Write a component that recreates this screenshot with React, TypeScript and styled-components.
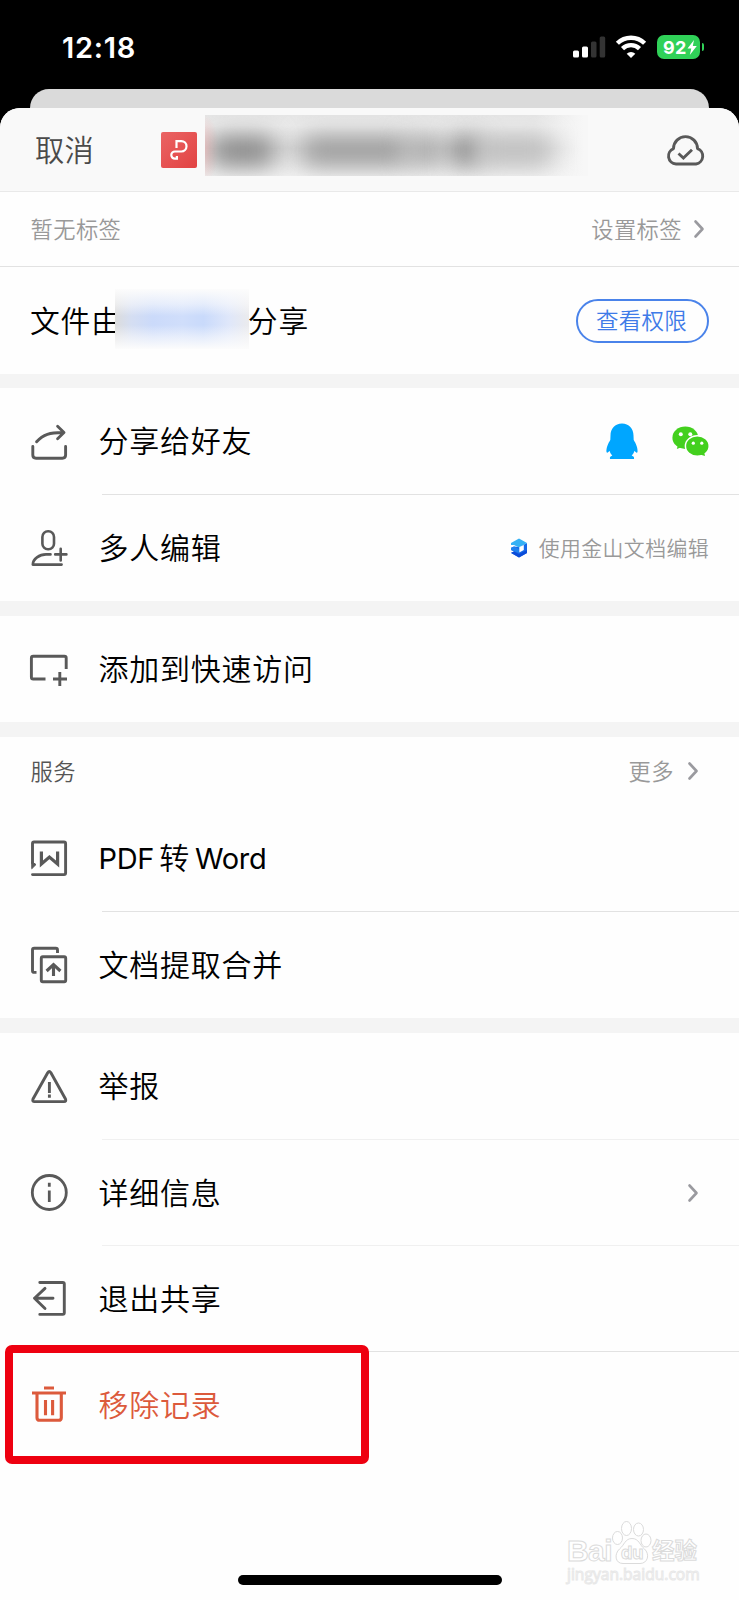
import React from 'react';
import styled, { createGlobalStyle } from 'styled-components';

const GlobalStyle = createGlobalStyle`
  * { box-sizing: border-box; }
  body {
    margin: 0;
    background: #000;
    font-family: 'Inter', 'Noto Sans CJK SC', sans-serif;
    font-weight: 350;
    -webkit-font-smoothing: antialiased;
  }
`;

const Screen = styled.div`
  position: relative;
  width: 739px;
  height: 1600px;
  display: flex;
  flex-direction: column;
  background: #000;
  overflow: hidden;
`;

const StatusBar = styled.div`
  height: 89px;
  padding: 5px 35px 0 62px;
  display: flex;
  align-items: center;
  justify-content: space-between;
  color: #fff;
`;

const Time = styled.span`
  font-size: 29px;
  font-weight: 600;
  letter-spacing: 0.7px;
`;

const StatusIcons = styled.div`
  display: flex;
  align-items: center;
`;

const Signal = styled.svg`
  width: 33px;
  height: 24px;
  margin-right: 9px;
`;

const Wifi = styled.svg`
  width: 32px;
  height: 24px;
  margin-right: 10px;
`;

const Battery = styled.div`
  display: flex;
  align-items: center;
  gap: 2px;
`;

const BatteryBody = styled.div`
  width: 43px;
  height: 24px;
  padding-left: 6px;
  border-radius: 7px;
  background: #30d158;
  display: flex;
  align-items: center;
  font-size: 18px;
  font-weight: 700;
  letter-spacing: 0.3px;
`;

const BatteryNub = styled.div`
  width: 2px;
  height: 8px;
  border-radius: 0 2px 2px 0;
  background: #30d158;
`;

const BackCard = styled.div`
  height: 19px;
  margin: 0 30px;
  border-radius: 19px 19px 0 0;
  background: #dadada;
`;

const Sheet = styled.main`
  flex: 1;
  border-radius: 20px 20px 0 0;
  overflow: hidden;
  background: #fefefe;
`;

const Header = styled.header`
  height: 84px;
  padding: 0 33px 0 35px;
  background: #f9f9f9;
  border-bottom: 1px solid #e9e9e9;
  display: flex;
  align-items: center;
`;

const Cancel = styled.span`
  width: 126px;
  margin-top: -3px;
  font-size: 29.3px;
  letter-spacing: 0.2px;
  color: #4a4a4a;
`;

const FileBadge = styled.svg`
  width: 36px;
  height: 36px;
  margin-right: 8px;
`;

const HiddenTitle = styled.div`
  width: 383px;
  height: 61px;
  margin: -9px auto 0 0;
  overflow: hidden;
  background:
    radial-gradient(ellipse 14px 34px at 0 55%, rgba(250, 195, 195, 0.8), transparent),
    linear-gradient(90deg, transparent 86%, #f7f7f7 99%),
    linear-gradient(180deg, #e6e6e6 0, #ececec 18%, #dadada 55%, #f2f2f2);
`;

const SmudgeLine = styled.div`
  display: flex;
`;

const Smudge = styled.span<{ $w: number; $gap: number; $tone: string }>`
  width: ${(p) => p.$w}px;
  height: 28px;
  margin: 22px 0 0 ${(p) => p.$gap}px;
  background: ${(p) => p.$tone};
  filter: blur(12px);
`;

const TagRow = styled.div`
  height: 75px;
  padding: 0 34px 0 30.5px;
  border-bottom: 1px solid #e2e2e2;
  display: flex;
  align-items: center;
  justify-content: space-between;
`;

const Muted = styled.span<{ $size?: number; $dark?: boolean }>`
  margin-top: -2px;
  font-size: ${(p) => p.$size ?? 22.3}px;
  letter-spacing: 0.4px;
  color: ${(p) => (p.$dark ? '#555' : '#999')};
`;

const Trailing = styled.div<{ $gap: number; $inset?: number }>`
  margin-left: auto;
  margin-right: ${(p) => p.$inset ?? 0}px;
  display: flex;
  align-items: center;
  gap: ${(p) => p.$gap}px;
`;

const OwnerRow = styled.div`
  height: 107px;
  padding: 0 30px;
  display: flex;
  align-items: center;
  color: #000;
`;

const OwnerText = styled.span`
  margin-top: -3px;
  font-size: 29.8px;
  letter-spacing: 0.8px;
`;

const HiddenName = styled.div`
  width: 134px;
  height: 60px;
  margin: -3px -1px 0 -7px;
  position: relative;
  overflow: hidden;
  background:
    linear-gradient(180deg, rgba(252, 252, 252, 1) 0, rgba(252, 252, 252, 0.55) 25%, rgba(252, 252, 252, 0) 45%, rgba(252, 252, 252, 0) 60%, rgba(252, 252, 252, 0.55) 80%, rgba(252, 252, 252, 1) 100%),
    linear-gradient(90deg, #dcdcdc 0, #d5def2 12%, #cbdafa 28%, #d0defb 50%, #c9dafb 66%, #dfe7fa 85%, #ebebed 100%);
`;

const PillButton = styled.button`
  width: 133px;
  height: 44px;
  margin-left: auto;
  padding: 0 2px 3px 0;
  border: 2px solid #4a83ea;
  border-radius: 22px;
  background: transparent;
  font: inherit;
  font-size: 22.5px;
  letter-spacing: 0.3px;
  color: #3f7be8;
`;

const Section = styled.section`
  border-top: 15px solid #f4f4f4;

  &:first-of-type {
    border-top-width: 14px;
  }
`;

const Row = styled.div<{ $danger?: boolean }>`
  height: 106px;
  padding: 0 30px 0 29px;
  display: flex;
  align-items: center;
  color: ${(p) => (p.$danger ? '#dc5a3c' : '#000')};
`;

const Divider = styled.hr<{ $faint?: boolean; $tight?: boolean }>`
  height: 1px;
  margin: ${(p) => (p.$tight ? '-1px' : '0')} 0 0 102px;
  border: 0;
  background: ${(p) => (p.$faint ? '#f0f0f0' : '#e2e2e2')};
`;

const Label = styled.span`
  margin: -4px 0 0 29.5px;
  font-size: 30px;
  letter-spacing: 0.75px;
`;

const Latin = styled.span`
  font-weight: 400;
  font-size: 29px;
  letter-spacing: -0.3px;
`;

const Joint = styled.span`
  margin: 0 5px;
`;

const RowIcon = styled.svg<{ $danger?: boolean }>`
  width: 40px;
  height: 40px;
  flex: none;
  fill: none;
  stroke: ${(p) => (p.$danger ? '#dc5a3c' : '#595959')};
  stroke-width: 2.9;
  stroke-linecap: round;
  stroke-linejoin: round;
`;

const ServiceHead = styled.div`
  height: 68px;
  padding: 0 30.5px;
  display: flex;
  align-items: center;
`;

const ChevronIcon = styled.svg`
  width: 12px;
  height: 20px;
  flex: none;
  fill: none;
  stroke: #9a9a9f;
  stroke-width: 2.6;
  stroke-linecap: round;
  stroke-linejoin: round;
`;

const AppLogo = styled.svg<{ $w: number; $h: number }>`
  width: ${(p) => p.$w}px;
  height: ${(p) => p.$h}px;
`;

const Highlight = styled.div`
  position: absolute;
  left: 5px;
  top: 1345px;
  width: 364px;
  height: 119px;
  border: 8px solid #ee0010;
  border-radius: 7px;
`;

const HomeIndicator = styled.div`
  position: absolute;
  left: 238px;
  bottom: 15px;
  width: 264px;
  height: 10px;
  border-radius: 5px;
  background: #000;
`;

const Watermark = styled.div`
  position: absolute;
  left: 567px;
  top: 1519px;
  width: 140px;
  color: #fff;
  -webkit-text-stroke: 1px #dbdbdb;
`;

const WatermarkTop = styled.div`
  display: flex;
  align-items: flex-end;
  height: 45px;
  font-weight: 700;
  line-height: 26px;
`;

const WatermarkBai = styled.span`
  width: 45px;
  font-family: 'Liberation Sans', sans-serif;
  font-size: 30px;
  letter-spacing: -0.6px;
`;

const Paw = styled.svg`
  width: 40px;
  height: 44px;
`;

const WatermarkCn = styled.span`
  font-size: 22.5px;
`;

const WatermarkUrl = styled.div`
  margin-top: 3px;
  font-family: 'Open Sans', sans-serif;
  font-size: 15.6px;
  line-height: 15px;
  font-weight: 400;
  white-space: nowrap;
  -webkit-text-stroke: 1px #e8e8e8;
`;

const Chevron = () => (
  <ChevronIcon viewBox="0 0 12 20">
    <path d="M2.5 2.5 L9.5 10 L2.5 17.5" />
  </ChevronIcon>
);

const glyphs = {
  share: (
    <>
      <path d="M3.8 25.5V34q0 3.2 3.2 3.2H33.4q3.2 0 3.2-3.2V25.5" />
      <path d="M7.6 20.8C14 13.5 21 11.3 34.5 11.5M28.6 5.3L35 11.5L28.6 17.7" />
    </>
  ),
  invite: (
    <g strokeWidth="2.6">
      <rect x="13.4" y="3.3" width="11.6" height="18" rx="5.6" />
      <path d="M21.5 26.4H17C10.5 26.4 3.8 31 3.8 36.6H32.6" />
      <path d="M26.2 26.4H37.4M31.7 20.8V32.4" />
    </g>
  ),
  quick: (
    <>
      <path d="M16.5 30H4.2q-1.8 0-1.8-1.8V9q0-1.8 1.8-1.8H35.4q1.8 0 1.8 1.8V20" strokeLinecap="butt" />
      <path d="M24 30H38M30.8 23V37" strokeLinecap="butt" />
    </>
  ),
  word: (
    <>
      <path d="M3.5 25V5.5q0-1.5 1.5-1.5H35q1.6 0 1.6 1.5V35q0 1.6-1.6 1.6H3.5" />
      <path d="M3 24L7 26.5L3 30.5Z" fill="#595959" strokeWidth="1" />
      <path d="M12.4 13.5V26L20.4 19L28.6 26V13.5" strokeWidth="3.2" strokeLinecap="butt" strokeLinejoin="miter" />
    </>
  ),
  merge: (
    <>
      <path d="M7.5 27.4H5.2q-1.7 0-1.7-1.7V5q0-1.7 1.7-1.7H26.8q1.7 0 1.7 1.7V8" strokeLinecap="butt" />
      <rect x="12.3" y="11.7" width="24.4" height="25" rx="1.5" />
      <path d="M24.5 31V20M17.6 26L24.5 19.6L31.4 26" strokeWidth="3.1" strokeLinecap="butt" strokeLinejoin="miter" />
    </>
  ),
  warn: (
    <g strokeWidth="2.9">
      <path d="M18.7 6.7Q20.3 4.2 21.9 6.7L36.5 33Q37.5 35.6 35 35.6H5.6Q3 35.6 4 33Z" />
      <path d="M20.4 16V27M20.4 28.5V31.7" strokeLinecap="butt" />
    </g>
  ),
  info: (
    <g strokeWidth="2.8">
      <circle cx="20.3" cy="19.5" r="17" />
      <path d="M20.3 9.7V13.7M20.3 17.5V29" strokeLinecap="butt" />
    </g>
  ),
  exit: (
    <>
      <path d="M10.8 3.5H33.7q1.6 0 1.6 1.6V33.8q0 1.6-1.6 1.6H10.8" />
      <path d="M24 19.3H5.5M16 9.4L5.5 19.3L16 29.5" />
    </>
  ),
  trash: (
    <g strokeWidth="3.1" strokeLinecap="butt">
      <path d="M15 3H25M3 8H37" />
      <path d="M8 9V32.7q0 2.6 2.6 2.6H29.7q2.6 0 2.6-2.6V9" />
      <path d="M16.5 15V30.2M23.6 15V30.2" />
    </g>
  ),
};

const Item = ({
  icon,
  label,
  danger,
  children,
}: {
  icon: keyof typeof glyphs;
  label: React.ReactNode;
  danger?: boolean;
  children?: React.ReactNode;
}) => (
  <Row $danger={danger}>
    <RowIcon viewBox="0 0 40 40" $danger={danger}>{glyphs[icon]}</RowIcon>
    <Label>{label}</Label>
    {children}
  </Row>
);

const smudges = [
  { w: 60, gap: 8, tone: '#848484' },
  { w: 104, gap: 30, tone: '#999' },
  { w: 36, gap: 0, tone: '#a8a8a8' },
  { w: 26, gap: 10, tone: '#7c7c7c' },
  { w: 72, gap: 0, tone: '#bebebe' },
];

export default function App() {
  return (
    <Screen>
      <GlobalStyle />
      <StatusBar>
        <Time>12:18</Time>
        <StatusIcons>
          <Signal viewBox="0 0 33 24">
            <rect x="0" y="15.5" width="6" height="7" rx="1.5" fill="#fff" />
            <rect x="9" y="11.5" width="6" height="11" rx="1.5" fill="#fff" />
            <rect x="18" y="6.5" width="5.5" height="16" rx="1.5" fill="#333" />
            <rect x="26.7" y="1.5" width="5.5" height="21" rx="1.5" fill="#333" />
          </Signal>
          <Wifi viewBox="0 0 32 24" fill="none" stroke="#fff" strokeWidth="4.4">
            <path d="M2.4 8.3A19.4 19.4 0 0 1 29.6 8.3" />
            <path d="M7.5 13.6A12.2 12.2 0 0 1 24.5 13.6" />
            <path d="M16 23L11.7 18.7A6.2 6.2 0 0 1 20.3 18.7Z" fill="#fff" stroke="none" />
          </Wifi>
          <Battery>
            <BatteryBody>
              92
              <svg width="10" height="15" viewBox="0 0 10 15">
                <path d="M7 0L0.5 8.5H4.3L2.8 15L9.8 6H5.8Z" fill="#fff" />
              </svg>
            </BatteryBody>
            <BatteryNub />
          </Battery>
        </StatusIcons>
      </StatusBar>
      <BackCard />
      <Sheet>
        <Header>
          <Cancel>取消</Cancel>
          <FileBadge viewBox="0 0 36 36">
            <defs>
              <linearGradient id="badge" x1="0" y1="0" x2="1" y2="1">
                <stop offset="0" stopColor="#ea6464" />
                <stop offset="1" stopColor="#e24343" />
              </linearGradient>
            </defs>
            <rect width="36" height="36" rx="2" fill="url(#badge)" />
            <path
              d="M15.500 16V9.100H20.300A5.200 5.200 0 0 1 20.300 19.500H13.900A3.600 3.600 0 0 0 13.900 26.700H15.900V24"
              fill="none"
              stroke="#fff"
              strokeWidth="2.2"
            />
          </FileBadge>
          <HiddenTitle>
            <SmudgeLine>
              {smudges.map((s, i) => (
                <Smudge key={i} $w={s.w} $gap={s.gap} $tone={s.tone} />
              ))}
            </SmudgeLine>
          </HiddenTitle>
          <RowIcon viewBox="0 0 40 40">
            <path d="M10 34H30A8 8 0 0 0 31.5 18.6A12 12 0 0 0 7.5 18.6A8 8 0 0 0 10 34Z" />
            <path d="M12.5 23.5L17.4 28L26 19.8" strokeLinecap="butt" strokeLinejoin="miter" />
          </RowIcon>
        </Header>
        <TagRow>
          <Muted>暂无标签</Muted>
          <Trailing $gap={11}>
            <Muted>设置标签</Muted>
            <Chevron />
          </Trailing>
        </TagRow>
        <OwnerRow>
          <OwnerText>文件由</OwnerText>
          <HiddenName />
          <OwnerText>分享</OwnerText>
          <PillButton>查看权限</PillButton>
        </OwnerRow>
        <Section>
          <Item icon="share" label="分享给好友">
            <Trailing $gap={33}>
              <AppLogo $w={34} $h={37} viewBox="0 0 34 37" fill="#00a6ff">
                <path d="M17 0.5C24 0.5 28.5 5.5 28.5 12.5L28.7 17C31 20.5 33 25.5 32.5 29C32 30.5 30.5 29.2 29.5 27.8C28.8 30 28 31.5 26.7 32.5C28.5 33.3 29.5 34.2 29 36H5C4.5 34.2 5.5 33.3 7.3 32.5C6 31.5 5.2 30 4.5 27.8C3.5 29.2 2 30.5 1.5 29C1 25.5 3 20.5 5.3 17L5.5 12.5C5.5 5.5 10 0.5 17 0.5Z" />
              </AppLogo>
              <AppLogo $w={37} $h={30} viewBox="0 0 37 30" fill="#43d01e">
                <ellipse cx="13.3" cy="11.7" rx="12.9" ry="11.2" />
                <path d="M6 19L4.8 23L10 21Z" />
                <circle cx="8.8" cy="8.3" r="2" fill="#fff" />
                <circle cx="18.3" cy="8.3" r="2" fill="#fff" />
                <ellipse cx="25.3" cy="20" rx="11.9" ry="10.3" stroke="#fff" strokeWidth="1.5" />
                <path d="M28 28.5L33 30L32 25.5Z" />
                <circle cx="21.3" cy="17.2" r="1.6" fill="#fff" />
                <circle cx="29.8" cy="17.2" r="1.6" fill="#fff" />
              </AppLogo>
            </Trailing>
          </Item>
          <Divider />
          <Item icon="invite" label="多人编辑">
            <Trailing $gap={11}>
              <AppLogo $w={18} $h={20} viewBox="0 0 18 20">
                <path d="M9 9L17 5V15L9 19.5L1 15L4 13.5L1 12V9.8L4 8.5Z" fill="#1668e8" />
                <path d="M1 14.8L4 13.5L9 16L17 12V15L9 19.5Z" fill="#0b4bd8" />
                <path d="M1 10L4 8.5L9 11V15L1 12Z" fill="#1f80ee" />
                <path d="M9 0.5L17 5L9 9.5L4 7L1 7V5Z" fill="#35b1f5" />
                <path d="M9.3 9L13.8 7V12L9.3 14.5Z" fill="#fff" />
              </AppLogo>
              <Muted $size={20.9}>使用金山文档编辑</Muted>
            </Trailing>
          </Item>
        </Section>
        <Section>
          <Item icon="quick" label="添加到快速访问" />
        </Section>
        <Section>
          <ServiceHead>
            <Muted $dark>服务</Muted>
            <Trailing $gap={13} $inset={9.5}>
              <Muted>更多</Muted>
              <Chevron />
            </Trailing>
          </ServiceHead>
          <Item
            icon="word"
            label={
              <>
                <Latin>PDF</Latin>
                <Joint>转</Joint>
                <Latin>Word</Latin>
              </>
            }
          />
          <Divider />
          <Item icon="merge" label="文档提取合并" />
        </Section>
        <Section>
          <Item icon="warn" label="举报" />
          <Divider $faint />
          <Item icon="info" label="详细信息">
            <Trailing $gap={0} $inset={10}>
              <Chevron />
            </Trailing>
          </Item>
          <Divider $faint $tight />
          <Item icon="exit" label="退出共享" />
          <Divider $tight />
          <Item icon="trash" label="移除记录" danger />
        </Section>
      </Sheet>
      <Highlight />
      <HomeIndicator />
      <Watermark>
        <WatermarkTop>
          <WatermarkBai>Bai</WatermarkBai>
          <Paw viewBox="0 0 40 44" fill="#fff" stroke="#dbdbdb">
            <ellipse cx="5.5" cy="18" rx="5" ry="6.5" />
            <ellipse cx="14.5" cy="8.5" rx="5" ry="7" />
            <ellipse cx="26.5" cy="9.5" rx="5" ry="6.5" />
            <ellipse cx="34" cy="20.5" rx="5" ry="6.5" />
            <path d="M20 18.5C27 18.5 27.5 25 32.5 29C38 34 36 43.5 28 43.5H11C3 43.5 2 34 7.5 29C12.5 25 13 18.5 20 18.5Z" />
            <text x="9" y="39" fontSize="18" fontWeight="700" fontFamily="Inter">du</text>
          </Paw>
          <WatermarkCn>经验</WatermarkCn>
        </WatermarkTop>
        <WatermarkUrl>jingyan.baidu.com</WatermarkUrl>
      </Watermark>
    </Screen>
  );
}
